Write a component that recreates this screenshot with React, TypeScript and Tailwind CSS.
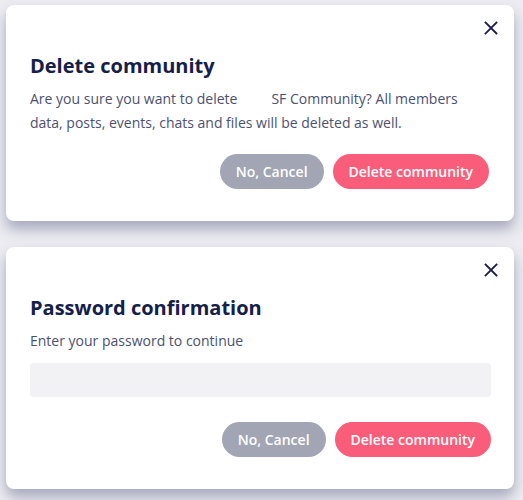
import type { ReactNode } from "react";

function CloseIcon() {
  return (
    <svg width="14" height="14" viewBox="0 0 14 14" fill="none">
      <path d="M1.5 1.5L12.5 12.5M12.5 1.5L1.5 12.5" stroke="#1b1f45" strokeWidth="1.8" strokeLinecap="square" />
    </svg>
  );
}

function Modal({ title, children, right = "pr-6" }: { title: string; children: ReactNode; right?: string }) {
  return (
    <div className={`relative rounded-[8px] bg-white pl-6 ${right} pt-[47px] pb-[32px] shadow-[0_8px_14px_rgba(96,100,135,0.5)]`}>
      <button className="absolute top-[16px] right-[16px] p-0">
        <CloseIcon />
      </button>
      <h2 className="text-[20px] leading-[28px] font-bold text-[#14204a]">{title}</h2>
      {children}
    </div>
  );
}

function Actions({ className }: { className: string }) {
  return (
    <div className={`flex justify-end gap-[9px] ${className}`}>
      <button className="h-[35px] rounded-full bg-[#a1a5b4] px-[16px] text-[14px] font-semibold text-white">
        No, Cancel
      </button>
      <button className="h-[35px] rounded-full bg-[#f95d7a] px-[16px] text-[14px] font-semibold text-white">
        Delete community
      </button>
    </div>
  );
}

export default function App() {
  return (
    <div
      className="flex min-h-[500px] w-[523px] flex-col gap-[26px] bg-[#ededf2] pl-[6px] pr-[9px] pt-[5px] pb-[10px]"
      style={{ fontFamily: "'Open Sans', 'Noto Sans', sans-serif" }}
    >
      <Modal title="Delete community" right="pr-[25px]">
        <p className="mt-[7px] text-[14px] leading-[24px] text-[#4b5170]">
          Are you sure you want to delete<span className="inline-block w-[34px]" />SF Community? All members
          data, posts, events, chats and files will be deleted as well.
        </p>
        <Actions className="mt-[19px]" />
      </Modal>
      <Modal title="Password confirmation" right="pr-[23px]">
        <p className="mt-[7px] text-[14px] leading-[24px] text-[#4b5170]">Enter your password to continue</p>
        <input type="password" className="mt-[10px] block h-[34px] w-full rounded-[4px] bg-[#f2f2f4] px-3 outline-none" />
        <Actions className="mt-[25px]" />
      </Modal>
    </div>
  );
}
